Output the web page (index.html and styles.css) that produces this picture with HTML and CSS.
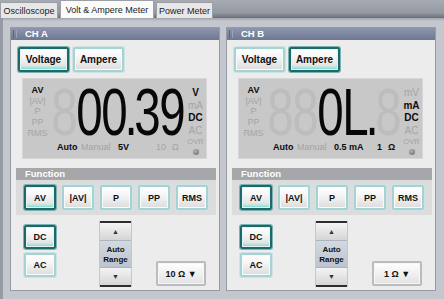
FILE: index.html
```html
<!DOCTYPE html>
<html lang="en">
<head>
    <meta charset="UTF-8">
    <title>Volt &amp; Ampere Meter</title>
    <link rel="stylesheet" href="styles.css">
</head>
<body>
    <div class="tabs">
        <div class="tab tab-osc">Oscilloscope</div>
        <div class="tab tab-va active">Volt &amp; Ampere Meter</div>
        <div class="tab tab-pm">Power Meter</div>
    </div>
    <div class="frame">
        <!-- Channel A -->
        <div class="panel">
            <div class="panel-head"><span class="grip"></span>CH A</div>
            <div class="panel-body">
                <div class="mode-row">
                    <button class="btn mode on">Voltage</button>
                    <button class="btn mode">Ampere</button>
                </div>
                <div class="display-wrap">
                    <div class="lcd">
                        <div class="lcd-left">
                            <span class="on">AV</span>
                            <span>|AV|</span>
                            <span>P</span>
                            <span>PP</span>
                            <span>RMS</span>
                        </div>
                        <div class="lcd-mid">
                            <div class="digits">
                                <span class="dg ghost">8</span><span class="dg">0</span><span class="dg">0</span><span class="dg dot">.</span><span class="dg">3</span><span class="dg">9</span>
                            </div>
                            <div class="lcd-bottom">
                                <span class="b-auto on">Auto</span>
                                <span class="b-manual">Manual</span>
                                <span class="b-range on">5V</span>
                                <span class="b-res">10</span>
                                <span class="b-ohm">&Omega;</span>
                            </div>
                        </div>
                        <div class="lcd-right">
                            <span class="on">V</span>
                            <span>mA</span>
                            <span class="on">DC</span>
                            <span>AC</span>
                            <span class="ovr">OVR</span>
                            <span class="led"></span>
                        </div>
                    </div>
                </div>
                <div class="func-head">Function</div>
                <div class="func-row">
                    <button class="btn fn on">AV</button>
                    <button class="btn fn">|AV|</button>
                    <button class="btn fn">P</button>
                    <button class="btn fn">PP</button>
                    <button class="btn fn">RMS</button>
                </div>
                <div class="lower">
                    <div class="coupling">
                        <button class="btn fn on">DC</button>
                        <button class="btn fn">AC</button>
                    </div>
                    <div class="range">
                        <button class="range-btn up">&#9650;</button>
                        <div class="range-label">Auto<br>Range</div>
                        <button class="range-btn down">&#9660;</button>
                    </div>
                    <button class="drop">10 &Omega; &#9660;</button>
                </div>
            </div>
        </div>

        <!-- Channel B -->
        <div class="panel">
            <div class="panel-head"><span class="grip"></span>CH B</div>
            <div class="panel-body">
                <div class="mode-row">
                    <button class="btn mode">Voltage</button>
                    <button class="btn mode on">Ampere</button>
                </div>
                <div class="display-wrap">
                    <div class="lcd">
                        <div class="lcd-left">
                            <span class="on">AV</span>
                            <span>|AV|</span>
                            <span>P</span>
                            <span>PP</span>
                            <span>RMS</span>
                        </div>
                        <div class="lcd-mid">
                            <div class="digits">
                                <span class="dg ghost">8</span><span class="dg ghost">8</span><span class="dg">0</span><span class="dg">L</span><span class="dg dot">.</span><span class="dg ghost">8</span>
                            </div>
                            <div class="lcd-bottom">
                                <span class="b-auto on">Auto</span>
                                <span class="b-manual">Manual</span>
                                <span class="b-range on">0.5 mA</span>
                                <span class="b-res on">1</span>
                                <span class="b-ohm on">&Omega;</span>
                            </div>
                        </div>
                        <div class="lcd-right">
                            <span>mV</span>
                            <span class="on">mA</span>
                            <span class="on">DC</span>
                            <span>AC</span>
                            <span class="ovr">OVR</span>
                            <span class="led"></span>
                        </div>
                    </div>
                </div>
                <div class="func-head">Function</div>
                <div class="func-row">
                    <button class="btn fn on">AV</button>
                    <button class="btn fn">|AV|</button>
                    <button class="btn fn">P</button>
                    <button class="btn fn">PP</button>
                    <button class="btn fn">RMS</button>
                </div>
                <div class="lower">
                    <div class="coupling">
                        <button class="btn fn on">DC</button>
                        <button class="btn fn">AC</button>
                    </div>
                    <div class="range">
                        <button class="range-btn up">&#9650;</button>
                        <div class="range-label">Auto<br>Range</div>
                        <button class="range-btn down">&#9660;</button>
                    </div>
                    <button class="drop">1 &Omega; &#9660;</button>
                </div>
            </div>
        </div>
    </div>
</body>
</html>
```

FILE: styles.css
```css
body {
    margin: 0;
    width: 444px;
    height: 299px;
    overflow: hidden;
    font-family: "Liberation Sans", Arial, sans-serif;
    background-color: #b3b7bf;
}

button {
    font-family: "Liberation Sans", Arial, sans-serif;
    padding: 0;
    cursor: pointer;
}

/* Tabs */
.tabs {
    height: 18px;
    display: flex;
    align-items: flex-end;
    gap: 2px;
    background: linear-gradient(#a6aab2, #959aa3 70%, #6b6f78);
}

.tab {
    height: 16px;
    line-height: 16px;
    font-size: 9px;
    color: #1b1b1b;
    text-align: center;
    background-color: #e7e7e7;
    border: 1px solid #9c9fa5;
    border-bottom: none;
    box-sizing: border-box;
}

.tab-osc { width: 58px; }
.tab-va { width: 94px; }
.tab-pm { width: 57px; }

.tab.active {
    height: 18px;
    line-height: 18px;
    background-color: #fbfbfb;
}

/* Frame with the two channels */
.frame {
    height: 281px;
    box-sizing: border-box;
    padding: 9px 8px 8px 7px;
    display: flex;
    gap: 6px;
    border-left: 3px solid #969ba5;
    background: linear-gradient(#9ea2aa, #c4c7ce 3px, #c4c7ce);
}

.panel {
    width: 210px;
    box-sizing: border-box;
    border: 1px solid #959aa4;
    background-color: #ececec;
    display: flex;
    flex-direction: column;
}

.panel-head {
    height: 12px;
    line-height: 12px;
    font-size: 9.5px;
    font-weight: bold;
    color: #fff;
    background: linear-gradient(#8d96ad, #6e7892);
    padding-left: 13px;
    display: flex;
    align-items: center;
}

.grip {
    width: 2px;
    height: 8px;
    border-left: 1px solid #5d6680;
    border-right: 1px solid #9ca4ba;
    margin-left: -11px;
    margin-right: 8px;
}

.panel-body {
    flex: 1;
    padding: 0 3px 0 5px;
}

/* Buttons */
.btn {
    font-size: 9.5px;
    font-weight: bold;
    color: #111;
    border: 2px solid #a7d2d4;
    border-radius: 2px;
    background: linear-gradient(#ffffff, #f3f3f3 45%, #dcdcdc);
    box-shadow: inset 0 0 0 1px #f7fbfb, 0 0 0 1px #cfe3e4;
    box-sizing: border-box;
}

.btn.on {
    border-color: #1b6a69;
    box-shadow: inset 0 0 0 1px #e8f4f3, inset 0 -3px 3px -1px #63e3cf, 0 0 0 1px #7bb1b0;
}

.mode-row {
    display: flex;
    gap: 4px;
    padding-left: 2px;
    margin-top: 7px;
}

.mode {
    width: 51px;
    height: 25px;
    font-size: 10px;
}

/* LCD display */
.display-wrap {
    margin-top: 2px;
    padding: 4px 9px 4px 6px;
}

.lcd {
    height: 81px;
    box-sizing: border-box;
    border: 1px solid #d6d6d6;
    background-color: #c8c8c8;
    display: flex;
    color: #a4a4a4;
}

.lcd .on {
    color: #0c0c0c;
    font-weight: bold;
}

.lcd-left {
    width: 29px;
    padding-top: 6px;
    font-size: 9px;
    line-height: 10.7px;
    text-align: center;
}

.lcd-left span,
.lcd-right span {
    display: block;
}

.lcd-mid {
    width: 133px;
    padding-top: 3px;
}

.digits {
    display: flex;
    height: 60px;
    line-height: 60px;
    font-size: 66px;
    color: #080808;
}

.dg {
    width: 25px;
    display: flex;
    justify-content: center;
    transform: scaleX(0.72);
}

.dg.dot {
    width: 8px;
}

.dg.ghost {
    color: #bdbdbd;
}

.lcd-bottom {
    display: flex;
    height: 11px;
    line-height: 11px;
    font-size: 9px;
    padding-left: 5px;
}

.b-auto { width: 24px; }
.b-manual { width: 37px; }
.b-range { width: 36px; }
.b-res { width: 12px; text-align: right; }
.b-ohm { margin-left: 6px; }

.lcd-right {
    width: 21px;
    padding-top: 8px;
    font-size: 10px;
    line-height: 12.5px;
    text-align: center;
}

.lcd-right .ovr {
    font-size: 7.5px;
    line-height: 10px;
}

.lcd-right .led {
    width: 6px;
    height: 6px;
    margin: 2px auto 0;
    border-radius: 50%;
    background: radial-gradient(circle at 40% 35%, #b4b4b4, #7c7c7c 70%);
}

/* Function section */
.func-head {
    margin-top: 5px;
    height: 12px;
    line-height: 12px;
    padding-left: 9px;
    font-size: 9.5px;
    font-weight: bold;
    color: #fff;
    background-color: #a5a7ab;
}

.func-row {
    display: flex;
    gap: 6px;
    padding: 5px 8px;
    background-color: #dcdcdc;
}

.fn {
    width: 32px;
    height: 25px;
    font-size: 9px;
}

/* Coupling, range and resistor */
.lower {
    display: flex;
    align-items: flex-start;
    padding: 6px 0 0 8px;
}

.coupling {
    display: flex;
    flex-direction: column;
    gap: 4px;
    margin-top: 4px;
}

.coupling .fn {
    height: 24px;
}

.range {
    width: 33px;
    margin-left: 43px;
    display: flex;
    flex-direction: column;
    border-left: 1px solid #c4c6c9;
    border-right: 1px solid #c4c6c9;
    box-sizing: border-box;
}

.range-btn {
    height: 19px;
    border: none;
    font-size: 7px;
    color: #333;
    background: linear-gradient(#f4f4f4, #d5d5d5);
}

.range-btn.up {
    border-top: 2px solid #2e2e2e;
}

.range-btn.down {
    border-bottom: 2px solid #2e2e2e;
}

.range-label {
    height: 28px;
    box-sizing: border-box;
    padding-top: 4px;
    font-size: 8px;
    line-height: 10px;
    font-weight: bold;
    color: #111;
    text-align: center;
    background: linear-gradient(#d3d9e1, #bcc4cf);
    border-top: 1px solid #aeb4bc;
    border-bottom: 1px solid #aeb4bc;
}

.drop {
    width: 50px;
    height: 25px;
    margin-left: 24px;
    margin-top: 40px;
    font-size: 9px;
    font-weight: bold;
    color: #111;
    border: 2px solid #b9bdc1;
    border-radius: 2px;
    background: linear-gradient(#ffffff, #e2e2e2);
    box-shadow: inset 0 0 0 1px #f6f6f6;
}
```
